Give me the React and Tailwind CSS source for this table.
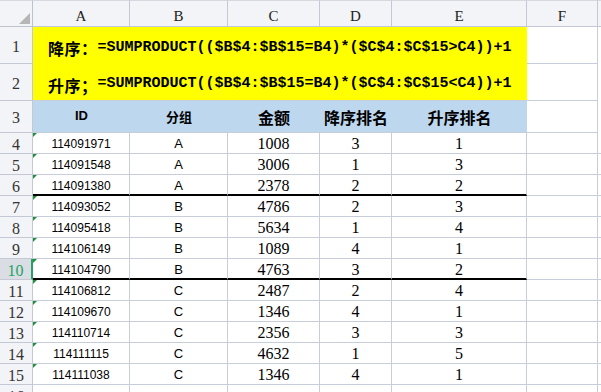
const rows = [
  ['114091971', 'A', 1008, 3, 1],
  ['114091548', 'A', 3006, 1, 3],
  ['114091380', 'A', 2378, 2, 2],
  ['114093052', 'B', 4786, 2, 3],
  ['114095418', 'B', 5634, 1, 4],
  ['114106149', 'B', 1089, 4, 1],
  ['114104790', 'B', 4763, 3, 2],
  ['114106812', 'C', 2487, 2, 4],
  ['114109670', 'C', 1346, 4, 1],
  ['114110714', 'C', 2356, 3, 3],
  ['114111115', 'C', 4632, 1, 5],
  ['114111038', 'C', 1346, 4, 1],
];

const serif = "font-['Liberation_Serif',serif]";
const grid = 'border-[#c8cdda]';

const Corner = () => (
  <div className="relative h-[27px] border-t border-r border-b border-t-[#d6d9e0] border-[#bcc2ce] bg-[#f3f4f7]">
    <svg className="absolute right-[2px] bottom-[2px]" width="11" height="11" viewBox="0 0 11 11">
      <polygon points="11,0 11,11 0,11" fill="#b6b6b6" />
    </svg>
  </div>
);

const ColHead = ({ label }) => (
  <div className={`flex h-[27px] items-center justify-center border-t border-r border-b border-t-[#d6d9e0] border-[#c3c8d4] bg-[#f3f4f7] pt-[6px] text-[15px] text-[#222] ${serif}`}>
    {label}
  </div>
);

const RowHead = ({ n, h, selected }) => (
  <div
    className={`flex items-center justify-center border-b pt-[3px] ${serif} text-[16px] ${
      selected
        ? 'border-r-2 border-r-[#21a366] border-b-[#c3c8d4] bg-[#dadde3] text-[#1ea362]'
        : 'border-r border-[#c3c8d4] bg-[#f3f4f7] text-[#333]'
    }`}
    style={{ height: h }}
  >
    {n}
  </div>
);

const Flag = () => (
  <svg className="absolute left-0 top-0" width="4" height="4" viewBox="0 0 4 4">
    <polygon points="0,0 4,0 0,4" fill="#1f8f3c" />
  </svg>
);

export default function App() {
  return (
    <div className="h-[392px] w-[601px] overflow-hidden bg-white">
      <div className="grid grid-cols-[33px_97px_98px_92px_72px_135px_71px_3px]">
        {/* column letters */}
        <Corner />
        {['A', 'B', 'C', 'D', 'E', 'F'].map((c) => (
          <ColHead key={c} label={c} />
        ))}
        <div className="h-[27px] border-t border-b border-t-[#d6d9e0] border-[#c3c8d4] bg-[#f3f4f7]" />

        {/* rows 1-2: yellow formula block */}
        <RowHead n="1" h="37px" />
        <div className="col-span-5 row-span-2 flex flex-col border-b border-[#c8cdda] bg-[#ffff00] pl-[15px] font-bold text-black">
          <div className="flex h-[37px] items-center pt-[5px]">
            <span className="font-['Noto_Sans_CJK_SC',sans-serif] text-[16px] tracking-[0.5px]">降序：</span>
            <span className="font-['Liberation_Mono',monospace] text-[15px]">=SUMPRODUCT(($B$4:$B$15=B4)*($C$4:$C$15&gt;C4))+1</span>
          </div>
          <div className="flex h-[36px] items-center pt-[5px]">
            <span className="font-['Noto_Sans_CJK_SC',sans-serif] text-[16px] tracking-[0.5px]">升序；</span>
            <span className="font-['Liberation_Mono',monospace] text-[15px]">=SUMPRODUCT(($B$4:$B$15=B4)*($C$4:$C$15&lt;C4))+1</span>
          </div>
        </div>
        <div className={`h-[37px] border-r border-b ${grid}`} />
        <div className={`h-[37px]`} />
        <RowHead n="2" h="37px" />
        <div className={`h-[37px] border-r border-b ${grid}`} />
        <div className={`h-[37px]`} />

        {/* row 3: blue headers */}
        <RowHead n="3" h="32px" />
        <div className="flex h-[32px] items-center justify-center border-b border-[#c8cdda] bg-[#bdd7ee] pb-[1px] font-['Liberation_Sans',sans-serif] text-[13px] font-bold">ID</div>
        <div className="flex h-[32px] items-center justify-center border-b border-[#c8cdda] bg-[#bdd7ee] font-['Noto_Sans_CJK_SC',sans-serif] text-[13px] font-bold">分组</div>
        <div className="flex h-[32px] items-center justify-center border-b border-[#c8cdda] bg-[#bdd7ee] font-['Noto_Sans_CJK_SC',sans-serif] text-[16px] font-bold">金额</div>
        <div className="flex h-[32px] items-center justify-center border-b border-[#c8cdda] bg-[#bdd7ee] font-['Noto_Sans_CJK_SC',sans-serif] text-[16px] font-bold">降序排名</div>
        <div className="flex h-[32px] items-center justify-center border-b border-[#c8cdda] bg-[#bdd7ee] font-['Noto_Sans_CJK_SC',sans-serif] text-[16px] font-bold">升序排名</div>
        <div className={`h-[32px] border-r border-b ${grid}`} />
        <div className="h-[32px]" />

        {/* data rows */}
        {rows.map(([id, grp, amt, desc, asc], i) => {
          const thick = i === 2 || i === 6;
          const b = thick ? 'border-b-2 border-b-black' : 'border-b';
          const cell = `flex h-[21px] items-center justify-center border-r ${grid} ${b}`;
          return [
            <RowHead key={`h${i}`} n={i + 4} h="21px" selected={i === 6} />,
            <div key={`a${i}`} className={`relative ${cell} pt-[2px] font-['Liberation_Sans',sans-serif] text-[12px] text-black`}>
              <Flag />
              {id}
            </div>,
            <div key={`b${i}`} className={`${cell} pt-[2px] font-['Liberation_Sans',sans-serif] text-[13px] text-black`}>{grp}</div>,
            <div key={`c${i}`} className={`${cell} pt-[2px] ${serif} text-[16px] text-black`}>{amt}</div>,
            <div key={`d${i}`} className={`${cell} pt-[2px] ${serif} text-[16px] text-black`}>{desc}</div>,
            <div key={`e${i}`} className={`${cell} pt-[2px] ${serif} text-[16px] text-black`}>{asc}</div>,
            <div key={`f${i}`} className={`h-[21px] border-r border-b ${grid}`} />,
            <div key={`g${i}`} className={`h-[21px] border-b ${grid}`} />,
          ];
        })}

        {/* row 16 (cut off at the window edge, as in the sheet) */}
        <RowHead n="16" h="21px" />
        {[0, 1, 2, 3, 4, 5].map((k) => (
          <div key={k} className={`h-[21px] border-r border-b ${grid}`} />
        ))}
        <div className="h-[21px]" />
      </div>
    </div>
  );
}
